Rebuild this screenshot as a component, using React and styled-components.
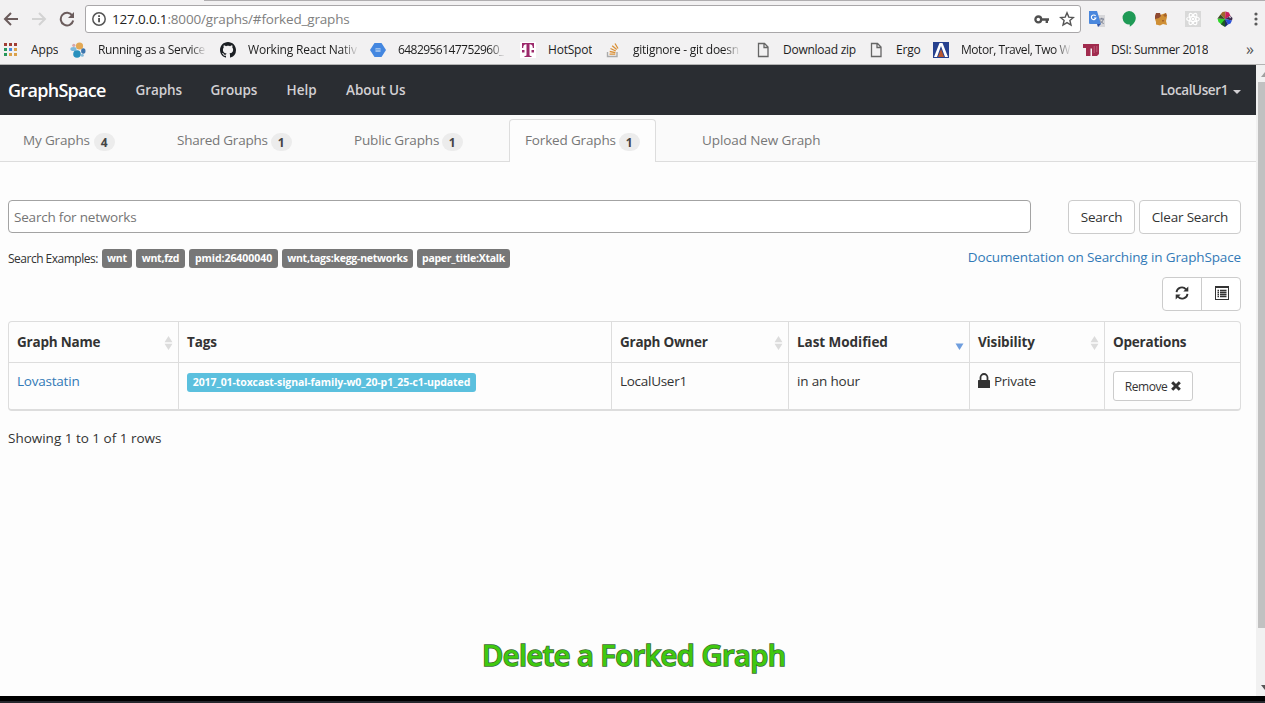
import React from "react";
import styled, { createGlobalStyle } from "styled-components";

const Global = createGlobalStyle`
  *, *::before, *::after { box-sizing: border-box; }
  html, body { margin: 0; overflow: hidden; background: #fdfdfd; }
  body { font-family: "Open Sans", "Noto Sans", sans-serif; font-size: 13px; color: #333; }
  svg { display: block; flex: none; }
`;

const Screen = styled.div`
  width: 1265px;
  height: 703px;
  display: flex;
  flex-direction: column;
  overflow: hidden;
`;

/* ---------- browser chrome ---------- */
const Chrome = styled.header`
  height: 65px;
  flex: none;
  background: #f2f1f2;
  border-bottom: 1px solid #b3b3b3;
`;
const TabEdge = styled.div`
  height: 1px;
  margin-left: 204px;
  background: #b0aeb0;
`;
const Toolbar = styled.div`
  height: 36px;
  display: flex;
  align-items: center;
`;
const NavIcons = styled.div`
  width: 85px;
  padding-left: 3px;
  display: flex;
  gap: 12px;
`;
const AddressBar = styled.div`
  width: 996px;
  height: 28px;
  padding: 0 5px 0 6px;
  display: flex;
  align-items: center;
  background: #fff;
  border: 1px solid #a9a7a9;
  border-radius: 3px;
`;
const Url = styled.span`
  flex: 1;
  margin-left: 6px;
  font-size: 13.5px;
  line-height: 24px;
  letter-spacing: -0.17px;
  color: #808080;
  b { font-weight: 400; color: #222; }
`;
const BarActions = styled.div`
  display: flex;
  gap: 10px;
  align-items: center;
`;
const Extensions = styled.div`
  flex: 1;
  padding-left: 8px;
  display: flex;
  align-items: center;
  gap: 16px;
`;
const Bookmarks = styled.div`
  height: 25px;
  padding-left: 3px;
  display: flex;
  align-items: center;
`;
const Bookmark = styled.div`
  width: ${(p) => p.$w}px;
  flex: none;
  display: flex;
  align-items: center;
  gap: 12px;
`;
const BookmarkLabel = styled.span`
  max-width: 109px;
  overflow: hidden;
  white-space: nowrap;
  font-size: 12px;
  line-height: 18px;
  letter-spacing: ${(p) => p.$ls || 0}px;
  color: #1d1d1d;
  ${(p) => p.$fade && "mask-image: linear-gradient(to right, #000 86%, rgba(0, 0, 0, 0.1));"}
`;
const More = styled.span`
  margin: -2px 0 0 1px;
  font-size: 16px;
  line-height: 18px;
  color: #555;
`;

/* ---------- page ---------- */
const Viewport = styled.div`
  height: 631px;
  flex: none;
  display: flex;
`;
const Page = styled.main`
  width: 1256px;
  position: relative;
  background: #fdfdfd;
`;
const Scrollbar = styled.div`
  flex: 1;
  padding-left: 2px;
  display: flex;
  flex-direction: column;
  justify-content: space-between;
  overflow: hidden;
  background: #f1f1f1;
`;
const Thumb = styled.div`
  height: 546px;
  background: #c1c1c1;
`;
const Arrow = styled.div`
  height: 17px;
  flex: none;
  margin-top: ${(p) => (p.$end ? "auto" : 0)};
  padding: ${(p) => (p.$end ? 6 : 7)}px 0 0 3px;
`;
const Navbar = styled.nav`
  height: 50px;
  padding: 0 15px 0 8px;
  display: flex;
  align-items: center;
  background: #2a2d32;
`;
const Brand = styled.span`
  width: 127.5px;
  font-size: 18px;
  font-weight: 600;
  letter-spacing: -0.7px;
  color: #fff;
`;
const NavLink = styled.span`
  width: ${(p) => (p.$w ? p.$w + "px" : "auto")};
  font-size: 13.5px;
  line-height: 20px;
  font-weight: 600;
  white-space: nowrap;
  letter-spacing: ${(p) => p.$ls || 0}px;
  color: #d2d0d3;
`;
const UserMenu = styled.div`
  margin-left: auto;
  display: flex;
  align-items: center;
  gap: 5px;
`;
const Caret = styled.i`
  margin-top: 3px;
  border: 4px solid transparent;
  border-top-color: #d2d0d3;
  border-bottom: 0;
`;
const TabStrip = styled.div`
  height: 47px;
  padding: 4px 0 0 7px;
  display: flex;
  gap: 30px;
  background: #fafafa;
  border-bottom: 1px solid #ddd;
`;
const Tab = styled.div`
  width: ${(p) => p.$w}px;
  height: 43px;
  padding: 0 0 0 15px;
  display: flex;
  align-items: flex-start;
  color: #777;
  border: 1px solid ${(p) => (p.$active ? "#ddd" : "transparent")};
  border-bottom: 0;
  border-radius: 4px 4px 0 0;
  background: ${(p) => (p.$active ? "#fdfdfd" : "transparent")};
`;
const TabLabel = styled.span`
  margin-top: 10px;
  font-size: 13.5px;
  line-height: 20px;
  white-space: nowrap;
  letter-spacing: ${(p) => p.$ls || -0.16}px;
`;
const Badge = styled.span`
  margin: 13px 15.5px 0 auto;
  width: 21px;
  height: 18px;
  border-radius: 9px;
  background: #ececec;
  color: #444;
  font-size: 12px;
  font-weight: 700;
  line-height: 19px;
  text-align: center;
  letter-spacing: -0.5px;
`;
const Content = styled.section`
  padding: 38px 15px 0 8px;
`;
const SearchRow = styled.div`
  height: 34px;
  display: flex;
  align-items: flex-start;
`;
const SearchInput = styled.input`
  width: 1023px;
  height: 33px;
  margin: 0 37px 0 0;
  padding: 1px 5px 0;
  border: 1px solid #a3a3a3;
  border-radius: 4px;
  background: #fff;
  font-family: inherit;
  font-size: 13.5px;
  letter-spacing: -0.2px;
  &::placeholder { color: #757575; opacity: 1; }
`;
const Button = styled.button`
  width: ${(p) => p.$w}px;
  height: ${(p) => p.$h || 34}px;
  margin: 0 ${(p) => p.$mr || 0}px 0 0;
  padding: 0;
  display: flex;
  align-items: center;
  justify-content: center;
  gap: ${(p) => (p.$small ? 4 : 5)}px;
  white-space: nowrap;
  border: 1px solid #ccc;
  border-radius: ${(p) => (p.$small ? 3 : 4)}px;
  background: #fff;
  font-family: inherit;
  font-size: ${(p) => (p.$small ? 12 : 13.5)}px;
  letter-spacing: ${(p) => (p.$small ? -0.45 : -0.2)}px;
  color: #333;
`;
const ExamplesRow = styled.div`
  height: 20px;
  margin-top: 14px;
  display: flex;
  align-items: center;
  gap: 4px;
`;
const ExamplesTitle = styled.span`
  width: 90px;
  font-size: 12px;
  white-space: nowrap;
  letter-spacing: -0.5px;
`;
const Label = styled.span`
  width: ${(p) => p.$w}px;
  height: 19px;
  border-radius: 3px;
  background: ${(p) => p.$bg || "#777"};
  color: #fff;
  font-size: 10.5px;
  font-weight: 700;
  line-height: 18px;
  text-align: center;
  white-space: nowrap;
  letter-spacing: ${(p) => p.$ls || 0}px;
`;
const DocLink = styled.a`
  margin: -2px 0 0 auto;
  font-size: 13.5px;
  white-space: nowrap;
  letter-spacing: -0.13px;
  color: #337ab7;
`;
const ToolGroup = styled.div`
  width: 79px;
  height: 34px;
  margin: 9px 0 10px auto;
  display: flex;
  border: 1px solid #ccc;
  border-radius: 4px;
  background: #fff;
`;
const Tool = styled.div`
  width: ${(p) => p.$w}px;
  padding: 0 0 2px;
  display: flex;
  align-items: center;
  justify-content: center;
  & + & { border-left: 1px solid #ccc; padding-left: 1px; }
`;
const Table = styled.div`
  width: 1233px;
  height: 90px;
  display: grid;
  grid-template-columns: 170px 433px 177px 181px 135px 135px;
  grid-template-rows: 41px 46px;
  border: 1px solid #ddd;
  border-bottom-width: 2px;
  border-radius: 4px;
  overflow: hidden;
  background: #fdfdfd;
`;
const Th = styled.div`
  padding: 0 5px 0 8px;
  display: flex;
  align-items: center;
  justify-content: space-between;
  font-size: 13.5px;
  font-weight: 700;
  white-space: nowrap;
  letter-spacing: ${(p) => p.$ls || -0.15}px;
  border-bottom: 1px solid #ddd;
  &:not(:nth-child(6n)) { border-right: 1px solid #ddd; }
  svg { margin-top: 1px; }
`;
const Td = styled.div`
  padding: 8px;
  display: flex;
  align-items: flex-start;
  gap: 4px;
  font-size: 13.5px;
  line-height: 20px;
  white-space: nowrap;
  letter-spacing: ${(p) => p.$ls || -0.28}px;
  color: ${(p) => (p.$link ? "#337ab7" : "#333")};
  &:not(:nth-child(6n)) { border-right: 1px solid #ddd; }
`;
const TagCell = styled(Td)`
  padding-top: 10px;
`;
const LockSlot = styled.span`
  padding-top: 2px;
`;
const Summary = styled.div`
  margin-top: 17px;
  font-size: 13.5px;
  line-height: 20px;
  letter-spacing: -0.01px;
`;
const Caption = styled.div`
  position: absolute;
  left: 482px;
  top: 570px;
  font-size: 29px;
  line-height: 40px;
  font-weight: 600;
  white-space: nowrap;
  letter-spacing: -0.5px;
  color: #3fc90f;
  -webkit-text-stroke: 1.5px #3b6a34;
  paint-order: stroke fill;
`;
const BottomEdge = styled.footer`
  flex: 1;
  background: #000;
  border-bottom: 2px solid #26282e;
`;

/* ---------- icons ---------- */
const Back = ({ color, flip }) => (
  <svg width="16" height="16" viewBox="0 0 16 16" fill="none" stroke={color} strokeWidth="2">
    <path d={flip ? "M1 8h13M8 2l6 6-6 6" : "M15 8H2M8 2L2 8l6 6"} />
  </svg>
);
const Reload = () => (
  <svg width="16" height="16" viewBox="0 0 16 16">
    <path d="M13.3 4.6A6.3 6.3 0 1 0 14.2 9.5" fill="none" stroke="#6b5c5c" strokeWidth="2" />
    <path d="M15 1v6H9z" fill="#6b5c5c" />
  </svg>
);
const Info = () => (
  <svg width="14" height="14" viewBox="0 0 14 14">
    <circle cx="7" cy="7" r="6.2" fill="none" stroke="#555" strokeWidth="1.5" />
    <path d="M6.2 6h1.7v4.3H6.2zM6.2 3.3h1.7v1.6H6.2z" fill="#444" />
  </svg>
);
const Key = () => (
  <svg width="15" height="9" viewBox="0 0 15 9">
    <circle cx="4.3" cy="4.4" r="2.9" fill="none" stroke="#505050" strokeWidth="2.3" />
    <path d="M7 3.3h8v2.4h-1v2.2h-2.4V5.7H7z" fill="#505050" />
  </svg>
);
const Star = () => (
  <svg width="16" height="16" viewBox="0 0 16 16">
    <path d="M8 1.8l1.8 4.3 4.6.4-3.5 3 1.1 4.6-4-2.5-4 2.5 1.1-4.6-3.5-3 4.6-.4z" fill="none" stroke="#555" strokeWidth="1.4" />
  </svg>
);
const Translate = () => (
  <svg width="16" height="16" viewBox="0 0 16 16">
    <path d="M6 4h10v12H9z" fill="#d7d7da" />
    <path d="M0 0h8l4 13H1a1 1 0 0 1-1-1z" fill="#4a87dd" />
    <path d="M8 13h4l-3 3z" fill="#3155a8" />
    <path d="M6.6 5a2.3 2.3 0 1 0 .3 2H5" fill="none" stroke="#fff" strokeWidth="1.1" />
    <path d="M10.5 8h4.5M12.8 6.8V8M14.3 8.2c-.5 2-1.7 3.3-3 4M11.3 9.5c.7 1.4 2 2.5 3.4 3" fill="none" stroke="#6d7488" strokeWidth=".9" />
  </svg>
);
const Hangouts = () => (
  <svg width="16" height="16" viewBox="0 0 16 16">
    <path d="M8 0a6.8 6.8 0 0 1 6.8 6.8C14.8 11 11.5 14 8.8 15.8V13.6A6.8 6.8 0 1 1 8 0z" fill="#1f9a56" />
  </svg>
);
const Fox = () => (
  <svg width="16" height="16" viewBox="0 0 16 16">
    <path d="M3 3l4 1 3-1 3-1 1 4-1 4 1 4-4-1-3 1.5-4-1L3 11 2 8z" fill="#cf8f35" />
    <path d="M3 2l4 0 1 3-2 2-4 1V5z" fill="#8f4a32" />
    <path d="M10 4l3-2 1 3-2 1zM9 9h2v1.5H9z" fill="#a8642a" />
  </svg>
);
const ReactMark = () => (
  <svg width="16" height="16" viewBox="0 0 16 16">
    <rect width="16" height="16" fill="#d9d9d9" />
    <g fill="none" stroke="#fff" strokeWidth="1.2">
      <ellipse cx="8" cy="8" rx="6.3" ry="2.5" />
      <ellipse cx="8" cy="8" rx="6.3" ry="2.5" transform="rotate(60 8 8)" />
      <ellipse cx="8" cy="8" rx="6.3" ry="2.5" transform="rotate(120 8 8)" />
    </g>
    <circle cx="8" cy="8" r="1.3" fill="#fff" />
  </svg>
);
const Wheel = () => (
  <svg width="16" height="16" viewBox="0 0 16 16">
    <path d="M8 8L3.5 3.5 5.5 1 8.5.5z" fill="#a0682c" />
    <path d="M8 8L8.500.5 12 1.5 13.5 5z" fill="#c81f5c" />
    <path d="M8 8l5.5-3 2 2-.5 2.5z" fill="#3a2a4c" />
    <path d="M12 5l2 1-1 1.5z" fill="#fff" />
    <path d="M8 8l7 1.5-1.5 3-2.5 1z" fill="#2950d8" />
    <path d="M8 8l3 5.5-3 2.5z" fill="#1b2a6a" />
    <path d="M8 8v8l-4-2.5-.5-2.5z" fill="#1d5b22" />
    <path d="M8 8l-4 5-2.5-2L.5 7.5z" fill="#2ed62a" />
    <path d="M8 8L.5 7.5l3-4z" fill="#3c4a24" />
  </svg>
);
const Dots = () => (
  <svg width="4" height="14" viewBox="0 0 4 14" fill="#5a5a5a">
    <circle cx="2" cy="2" r="1.6" /><circle cx="2" cy="7" r="1.6" /><circle cx="2" cy="12" r="1.6" />
  </svg>
);
const MenuSlot = styled.span`
  margin-left: 5px;
`;
const AppsGrid = () => {
  const colors = ["#a03d35", "#a03d35", "#a03d35", "#27975a", "#4a8ae0", "#dba14a", "#27975a", "#dba14a", "#dba14a"];
  return (
    <svg width="16" height="16" viewBox="0 0 16 16">
      {colors.map((c, i) => (
        <rect key={i} x={1 + (i % 3) * 5} y={1 + Math.floor(i / 3) * 5} width="3" height="3" fill={c} />
      ))}
    </svg>
  );
};
const Elastic = () => (
  <svg width="16" height="16" viewBox="0 0 16 16">
    <circle cx="9.5" cy="4" r="3.6" fill="#e3a955" />
    <circle cx="3.8" cy="3.3" r="1.6" fill="#d9a9a9" />
    <ellipse cx="3.5" cy="7" rx="3.1" ry="2" fill="#7db9dc" />
    <ellipse cx="13.3" cy="9" rx="2.2" ry="2.8" fill="#3b74ad" />
    <circle cx="7" cy="12" r="3.8" fill="#2890bd" />
    <circle cx="12.3" cy="13.2" r="1.5" fill="#84b9d8" />
  </svg>
);
const Github = () => (
  <svg width="16" height="16" viewBox="0 0 16 16">
    <path fill="#1b1f23" d="M8 0C3.58 0 0 3.58 0 8c0 3.54 2.29 6.53 5.47 7.59.4.07.55-.17.55-.38 0-.19-.01-.82-.01-1.49-2.01.37-2.53-.49-2.69-.94-.09-.23-.48-.94-.82-1.13-.28-.15-.68-.52-.01-.53.63-.01 1.08.58 1.23.82.72 1.21 1.87.87 2.33.66.07-.52.28-.87.51-1.07-1.78-.2-3.64-.89-3.64-3.95 0-.87.31-1.59.82-2.15-.08-.2-.36-1.02.08-2.12 0 0 .67-.21 2.2.82.64-.18 1.32-.27 2-.27s1.36.09 2 .27c1.53-1.04 2.2-.82 2.2-.82.44 1.1.16 1.92.08 2.12.51.56.82 1.27.82 2.15 0 3.07-1.87 3.75-3.65 3.95.29.25.54.73.54 1.48 0 1.07-.01 1.93-.01 2.2 0 .21.15.46.55.38A8.01 8.01 0 0 0 16 8c0-4.42-3.58-8-8-8z" />
  </svg>
);
const Hexagon = () => (
  <svg width="16" height="16" viewBox="0 0 16 16">
    <path d="M4.5 1h7L16 8l-4.5 7h-7L0 8z" fill="#4487e0" />
    <path d="M5.5 6h5v4h-5z" fill="#9cc0ee" /><path d="M5.5 7.7h5" stroke="#6ea3e6" />
  </svg>
);
const TMark = () => (
  <svg width="16" height="16" viewBox="0 0 16 16">
    <rect width="16" height="16" fill="#fff" />
    <path d="M2 1h12v5h-1.2c0-2.5-.8-3.8-3.3-3.8V13c0 .8.6 1 2 1v1H4.5v-1c1.4 0 2-.2 2-1V2.2C4 2.2 3.2 3.5 3.2 6H2zM2 8h2.5v2.5H2zM11.5 8H14v2.5h-2.5z" fill="#9c2a6c" />
  </svg>
);
const StackMark = () => (
  <svg width="16" height="16" viewBox="0 0 16 16" fill="none">
    <path d="M2.5 10v4.5h9.5V10" stroke="#aaa" strokeWidth="1.4" />
    <path d="M4.5 12.2h5.8M4.7 9.5l5.7 1.1M5.5 6.5l5.3 2.5M7.2 3.8l4.5 3.7M10 1.5l3 5" stroke="#d98f35" strokeWidth="1.3" />
  </svg>
);
const Doc = () => (
  <svg width="16" height="16" viewBox="0 0 16 16" fill="none" stroke="#666" strokeWidth="1.3">
    <path d="M3.5 1.5h6l3.5 3.5v9.5H3.5zM9 1.5v4h4" />
  </svg>
);
const ArrowMark = () => (
  <svg width="16" height="16" viewBox="0 0 16 16">
    <rect width="16" height="16" fill="#26418f" />
    <path d="M6.5 1h3L15 15h-3L8 4 4 15H1z" fill="#fff" />
    <path d="M8 7l3 8H5z" fill="#b9572e" />
  </svg>
);
const CollegeMark = () => (
  <svg width="16" height="16" viewBox="0 0 16 16" fill="#a12b4e">
    <path d="M0 2h16v10l-2 2H9V6.5H7.5V14H3V6H0z" />
    <path d="M11.2 4v7M13.8 4v6" stroke="#cf7f98" strokeWidth=".6" />
  </svg>
);
const Refresh = () => (
  <svg width="14" height="14" viewBox="0 0 14 14">
    <path d="M1.5 6.2A5.4 5.4 0 0 1 11 3.3M12.5 7.8A5.4 5.4 0 0 1 3 10.7" fill="none" stroke="#333" strokeWidth="1.8" />
    <path d="M13.3.6v5H8.3zM.7 13.4v-5h5z" fill="#333" />
  </svg>
);
const ListAlt = () => (
  <svg width="14" height="14" viewBox="0 0 14 14">
    <path d="M.5 0v14M13.5 0v14M0 13.5h14" stroke="#333" strokeWidth="1" />
    <path d="M0 0h14v2H0z" fill="#333" />
    <path d="M2.5 4.5H4M2.5 6.5H4M2.5 8.5H4M2.5 10.5H4M5 4.5h6.5M5 6.5h6.5M5 8.5h6.5M5 10.5h6.5" stroke="#333" strokeWidth="1.3" />
  </svg>
);
const Sort = () => (
  <svg width="9" height="14" viewBox="0 0 9 14" fill="#dcdcdc">
    <path d="M4.5 0L8.5 6.3h-8zM4.5 14l4-6.3h-8z" />
  </svg>
);
const SortDown = () => (
  <svg width="9" height="14" viewBox="0 0 9 14" fill="#6f9ede">
    <path d="M4.5 14l4-6.5h-8z" />
  </svg>
);
const Lock = () => (
  <svg width="12" height="15" viewBox="0 0 12 15">
    <path d="M2.5 8V4.5a3.5 3.5 0 0 1 7 0V8" fill="none" stroke="#333" strokeWidth="1.8" />
    <rect y="7" width="12" height="8" rx=".6" fill="#333" />
  </svg>
);
const Cross = () => (
  <svg width="10" height="10" viewBox="0 0 10 10">
    <path d="M1.2 1.2l7.6 7.6M8.8 1.2L1.2 8.8" stroke="#333" strokeWidth="3" />
  </svg>
);

const bookmarks = [
  { icon: AppsGrid, label: "Apps", w: 67, ls: -0.15 },
  { icon: Elastic, label: "Running as a Service", w: 150, fade: true, ls: -0.38 },
  { icon: Github, label: "Working React Nativ", w: 150, fade: true, ls: -0.2 },
  { icon: Hexagon, label: "6482956147752960_", w: 150, fade: true, ls: -0.55 },
  { icon: TMark, label: "HotSpot", w: 85, ls: -0.2 },
  { icon: StackMark, label: "gitignore - git doesn", w: 150, fade: true, ls: -0.24 },
  { icon: Doc, label: "Download zip", w: 113, ls: -0.25 },
  { icon: Doc, label: "Ergo", w: 65, ls: -0.2 },
  { icon: ArrowMark, label: "Motor, Travel, Two W", w: 150, fade: true, ls: -0.45 },
  { icon: CollegeMark, label: "DSI: Summer 2018", w: 162, ls: -0.37 },
];
const tabs = [
  { label: "My Graphs", count: 4, w: 124 },
  { label: "Shared Graphs", count: 1, w: 147, ls: -0.25 },
  { label: "Public Graphs", count: 1, w: 141 },
  { label: "Forked Graphs", count: 1, w: 147, active: true },
  { label: "Upload New Graph", w: 150, ls: -0.1 },
];
const examples = [
  ["wnt", 30, -0.2], ["wnt,fzd", 49, -0.25], ["pmid:26400040", 89, -0.05],
  ["wnt,tags:kegg-networks", 131, -0.25], ["paper_title:Xtalk", 93, -0.25],
];

export default function App() {
  return (
    <Screen>
      <Global />
      <Chrome>
        <TabEdge />
        <Toolbar>
          <NavIcons>
            <Back color="#6b5c5c" />
            <Back color="#d3d3d3" flip />
            <Reload />
          </NavIcons>
          <AddressBar>
            <Info />
            <Url><b>127.0.0.1</b>:8000/graphs/#forked_graphs</Url>
            <BarActions><Key /><Star /></BarActions>
          </AddressBar>
          <Extensions>
            <Translate /><Hangouts /><Fox /><ReactMark /><Wheel />
            <MenuSlot><Dots /></MenuSlot>
          </Extensions>
        </Toolbar>
        <Bookmarks>
          {bookmarks.map(({ icon: Icon, label, w, fade, ls }) => (
            <Bookmark key={label} $w={w}>
              <Icon />
              <BookmarkLabel $fade={fade} $ls={ls}>{label}</BookmarkLabel>
            </Bookmark>
          ))}
          <More>»</More>
        </Bookmarks>
      </Chrome>
      <Viewport>
        <Page>
          <Navbar>
            <Brand>GraphSpace</Brand>
            <NavLink $w={75} $ls={-0.1}>Graphs</NavLink>
            <NavLink $w={76} $ls={-0.1}>Groups</NavLink>
            <NavLink $w={59.5}>Help</NavLink>
            <NavLink>About Us</NavLink>
            <UserMenu><NavLink $ls={-0.4}>LocalUser1</NavLink><Caret /></UserMenu>
          </Navbar>
          <TabStrip>
            {tabs.map((t) => (
              <Tab key={t.label} $w={t.w} $active={t.active}>
                <TabLabel $ls={t.ls}>{t.label}</TabLabel>
                {t.count && <Badge>{t.count}</Badge>}
              </Tab>
            ))}
          </TabStrip>
          <Content>
            <SearchRow>
              <SearchInput placeholder="Search for networks" />
              <Button $w={67} $mr={4}>Search</Button>
              <Button $w={102}>Clear Search</Button>
            </SearchRow>
            <ExamplesRow>
              <ExamplesTitle>Search Examples:</ExamplesTitle>
              {examples.map(([text, w, ls]) => <Label key={text} $w={w} $ls={ls}>{text}</Label>)}
              <DocLink>Documentation on Searching in GraphSpace</DocLink>
            </ExamplesRow>
            <ToolGroup>
              <Tool $w={38}><Refresh /></Tool>
              <Tool $w={39}><ListAlt /></Tool>
            </ToolGroup>
            <Table>
              <Th $ls={-0.2}>Graph Name<Sort /></Th>
              <Th>Tags</Th>
              <Th $ls={-0.25}>Graph Owner<Sort /></Th>
              <Th $ls={-0.05}>Last Modified<SortDown /></Th>
              <Th>Visibility<Sort /></Th>
              <Th $ls={-0.22}>Operations</Th>
              <Td $link $ls={-0.22}>Lovastatin</Td>
              <TagCell><Label $w={289} $bg="#5bc0de" $ls={-0.09}>2017_01-toxcast-signal-family-w0_20-p1_25-c1-updated</Label></TagCell>
              <Td>LocalUser1</Td>
              <Td $ls={-0.18}>in an hour</Td>
              <Td><LockSlot><Lock /></LockSlot>Private</Td>
              <Td><Button $w={80} $h={30} $small>Remove <Cross /></Button></Td>
            </Table>
            <Summary>Showing 1 to 1 of 1 rows</Summary>
          </Content>
          <Caption>Delete a Forked Graph</Caption>
        </Page>
        <Scrollbar>
          <Arrow><svg width="8" height="5" viewBox="0 0 8 5"><path d="M4 0l4 5H0z" fill="#a0a0a0" /></svg></Arrow>
          <Thumb />
          <Arrow $end><svg width="8" height="5" viewBox="0 0 8 5"><path d="M0 0h8L4 5z" fill="#555" /></svg></Arrow>
        </Scrollbar>
      </Viewport>
      <BottomEdge />
    </Screen>
  );
}
